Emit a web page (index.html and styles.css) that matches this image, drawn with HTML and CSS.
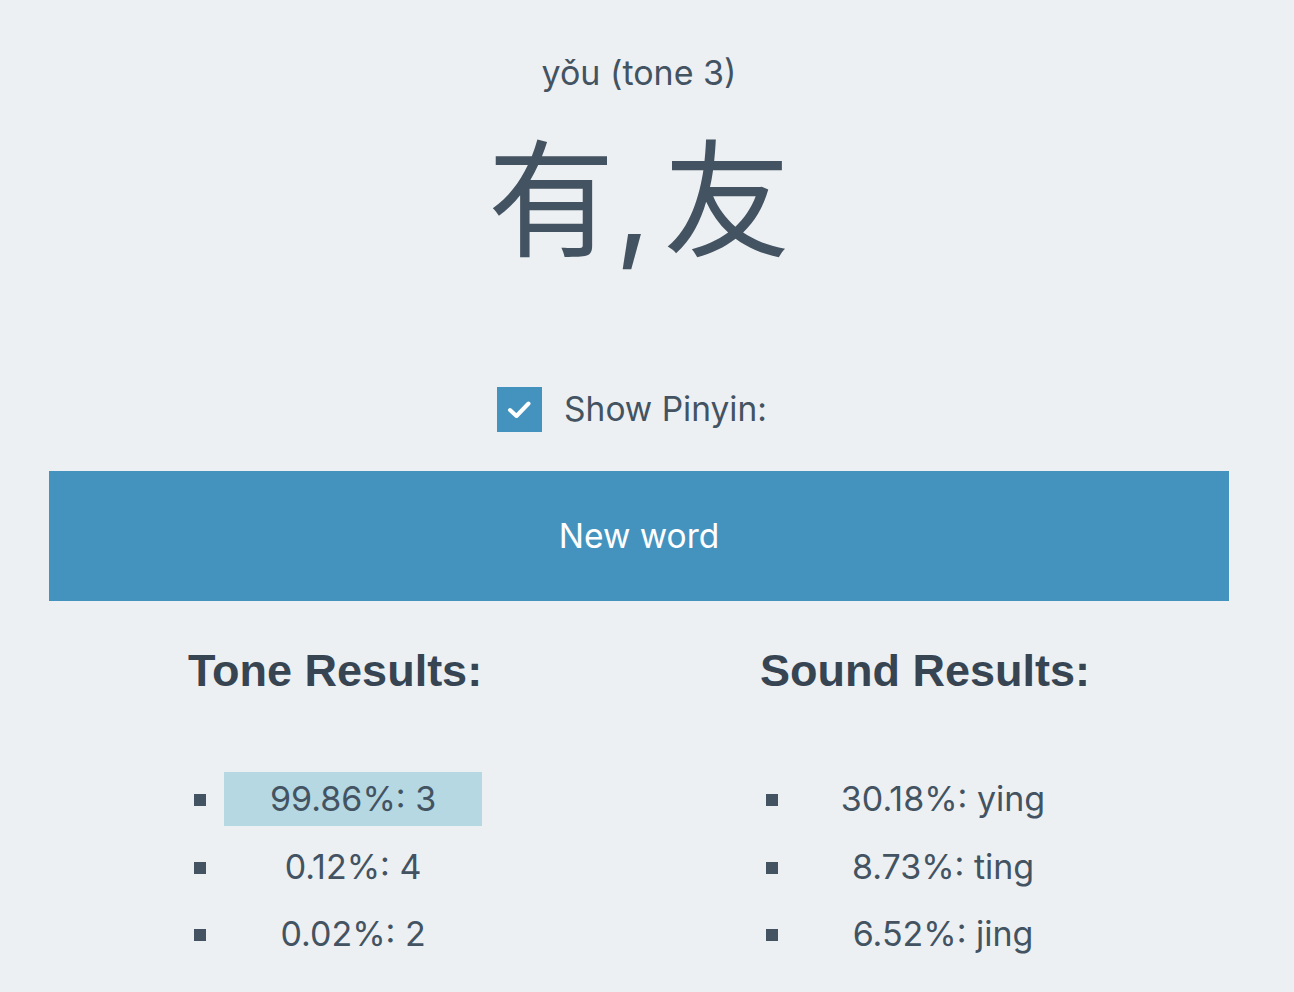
FILE: index.html
```html
<!DOCTYPE html>
<html lang="en">
<head>
<meta charset="utf-8">
<title>Tone practice</title>
<link rel="stylesheet" href="styles.css">
</head>
<body>
<main class="app">
  <div class="pinyin">yǒu (tone 3)</div>
  <div class="hanzi"><span class="cjk">有</span><span class="comma">,</span><span class="cjk">友</span></div>
  <label class="toggle">
    <span class="checkbox">
      <svg viewBox="0 0 45 45" width="45" height="45"><path d="M13 23 L19.5 29 L31.5 16.5" fill="none" stroke="#fff" stroke-width="4" stroke-linecap="round" stroke-linejoin="round"/></svg>
    </span>
    <span class="toggle-label">Show Pinyin:</span>
  </label>
  <button class="btn">New word</button>
  <section class="results">
    <div class="col">
      <h2>Tone Results:</h2>
      <ul>
        <li class="best">99.86%: 3</li>
        <li>0.12%: 4</li>
        <li>0.02%: 2</li>
      </ul>
    </div>
    <div class="col">
      <h2>Sound Results:</h2>
      <ul>
        <li>30.18%: ying</li>
        <li>8.73%: ting</li>
        <li>6.52%: jing</li>
      </ul>
    </div>
  </section>
</main>
</body>
</html>
```

FILE: styles.css
```css
html, body {
  margin: 0;
  padding: 0;
  background: #edf0f3;
}
body {
  font-family: Inter, "Noto Sans", sans-serif;
  color: #435361;
}
.app {
  width: 1180px;
  margin-left: 49px;
  text-align: center;
  padding-top: 53px;
}
.pinyin {
  font-size: 34px;
  line-height: 40px;
  height: 40px;
}
.hanzi {
  margin-top: 22px;
  font-size: 127px;
  line-height: 154px;
  height: 159px;
  white-space: pre;
}
.cjk {
  font-family: "Noto Sans CJK SC", sans-serif;
}
.comma {
  font-family: Inter, sans-serif;
  margin-right: 12px;
  margin-left: 0;
}
.toggle {
  margin-top: 113px;
  display: flex;
  justify-content: center;
  align-items: center;
  gap: 22px;
  height: 45px;
  margin-left: -14px;
}
.checkbox {
  width: 45px;
  height: 45px;
  background: #4493bf;
  display: block;
}
.checkbox svg { display: block; }
.toggle-label {
  font-size: 33.5px;
  line-height: 45px;
}
.btn {
  display: block;
  margin-top: 39px;
  width: 1180px;
  height: 130px;
  border: 0;
  background: #4493bf;
  color: #fff;
  font-family: Inter, sans-serif;
  font-size: 33.5px;
  padding: 0;
}
.results {
  display: flex;
  justify-content: space-around;
  margin-top: 42px;
}
.col {
  text-align: left;
}
.col h2 {
  margin: 0;
  font-family: "Liberation Sans", Arial, sans-serif;
  font-weight: bold;
  font-size: 45px;
  line-height: 56px;
  color: #374552;
}
.col ul {
  margin: 73px 0 0 0;
  padding-left: 36px;
  list-style: none;
}
.col li {
  position: relative;
  text-align: center;
  font-size: 34px;
  line-height: 54px;
  height: 54px;
  margin-bottom: 13.5px;
}
.col li::before {
  content: "";
  position: absolute;
  left: -30px;
  top: 22px;
  width: 12px;
  height: 12px;
  background: #435361;
}
.col li.best {
  background: #b5d8e3;
}
```
